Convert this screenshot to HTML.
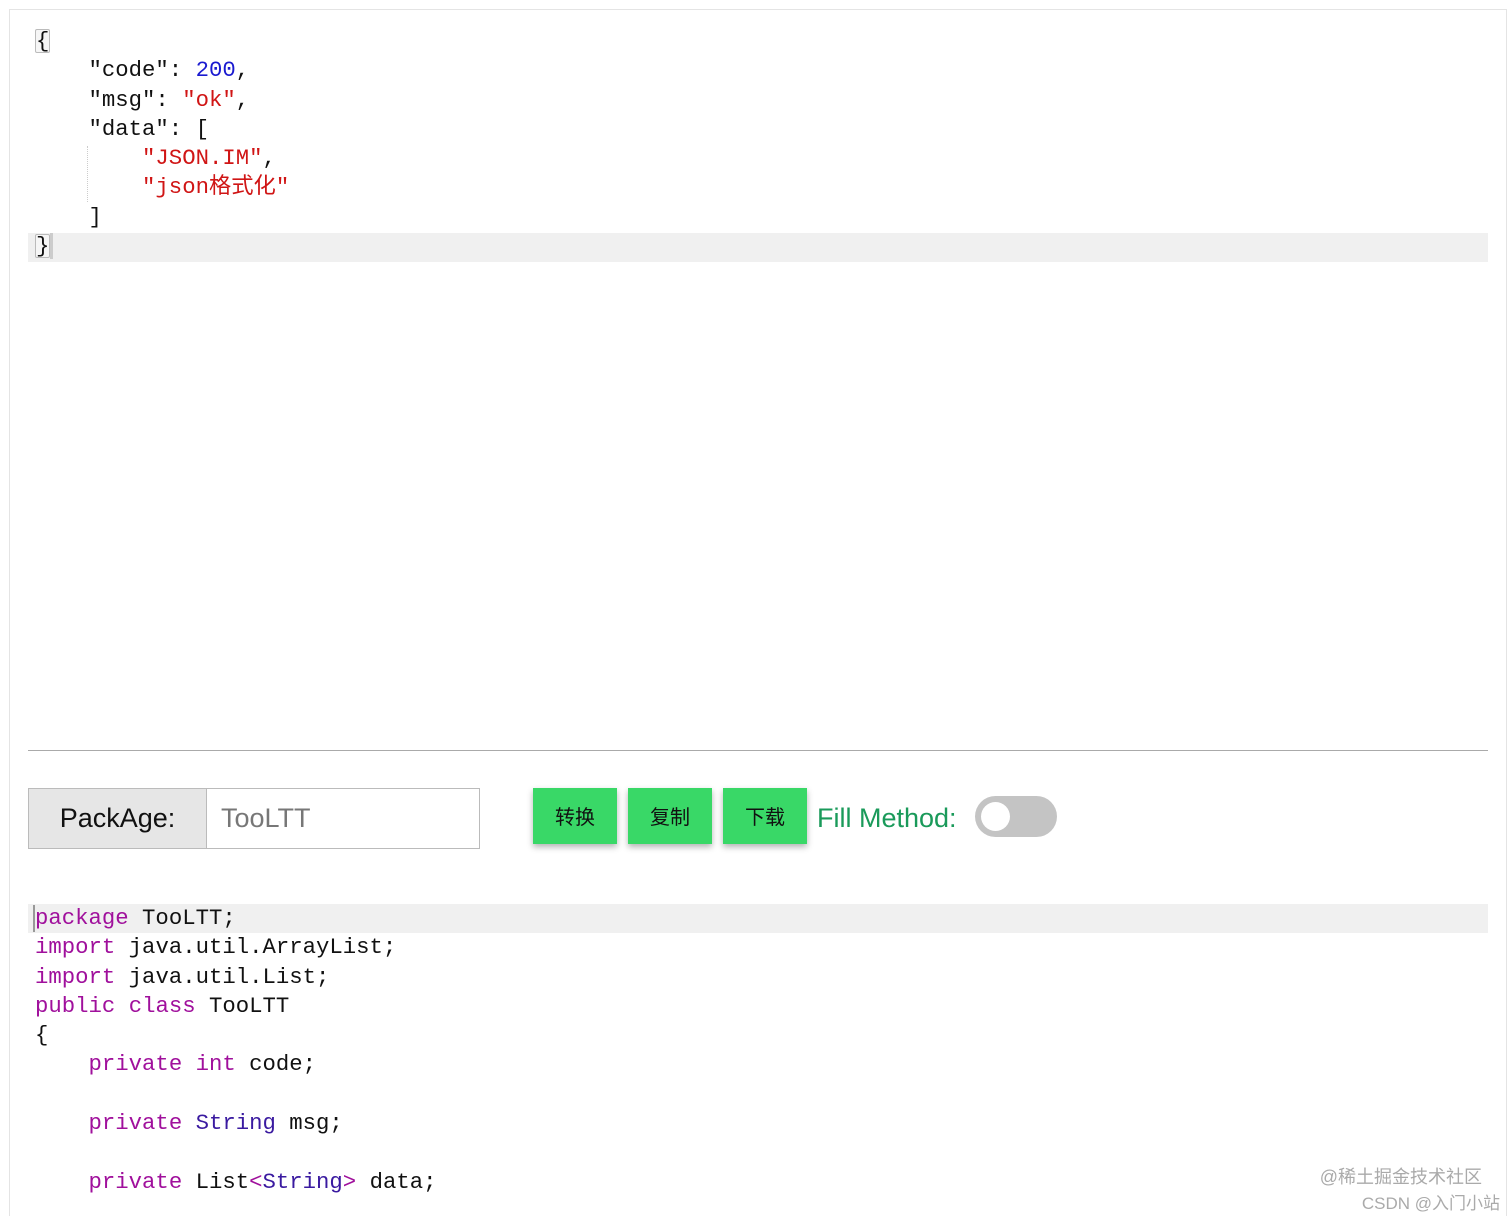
<!DOCTYPE html>
<html><head><meta charset="utf-8"><style>
html,body{margin:0;padding:0;background:#fff;width:1512px;height:1216px;overflow:hidden;position:relative}
.frame{position:absolute;left:9px;top:9px;width:1496px;height:1230px;border:1px solid #e4e4e4;}
.code{position:absolute;font-family:"Liberation Mono","Noto Sans CJK SC",monospace;font-size:22.3px;color:#111}
.ln{height:29.3px;line-height:29.3px;position:relative;white-space:pre}
.hl{position:absolute;left:28px;width:1460px;height:29px;background:#f0f0f0}
.n{color:#1a1ad0}.s{color:#d01515}.k{color:#a0109c}.t{color:#3a1aa0}
.br{display:inline-block;border:1px solid #bbb;border-radius:2px;line-height:22px;background:#f6f6f6}
.btn{position:absolute;top:788px;width:84px;height:56px;background:#39d867;box-shadow:0 3px 6px rgba(0,0,0,.3);font-family:"Noto Sans CJK SC",sans-serif;font-size:20px;line-height:56px;text-align:center;color:#111}
</style></head><body>
<div class="frame"></div>
<div class="hl" style="top:233px"></div>
<div class="hl" style="top:904px"></div>
<div style="position:absolute;left:87px;top:146px;height:56px;border-left:1px dotted #ccc"></div>
<div class="code" style="left:35px;top:27px">
<div class="ln"><span class="br">{</span></div>
<div class="ln">    "code": <span class="n">200</span>,</div>
<div class="ln">    "msg": <span class="s">"ok"</span>,</div>
<div class="ln">    "data": [</div>
<div class="ln">        <span class="s">"JSON.IM"</span>,</div>
<div class="ln">        <span class="s">"json格式化"</span></div>
<div class="ln">    ]</div>
<div class="ln"><span class="br">}</span><span style="display:inline-block;width:3px;height:26px;background:#ccc;vertical-align:middle"></span></div>
</div>
<div style="position:absolute;left:28px;top:750px;width:1460px;height:1px;background:#aaa"></div>
<div style="position:absolute;left:28px;top:788px;width:450px;height:59px;border:1px solid #bbb;font-family:'Liberation Sans',sans-serif;font-size:27px">
<div style="position:absolute;left:0;top:0;width:177px;height:59px;background:#e6e6e6;border-right:1px solid #bbb;line-height:59px;text-align:center;color:#111">PackAge:</div>
<div style="position:absolute;left:192px;top:0;line-height:59px;color:#777">TooLTT</div>
</div>
<div class="btn" style="left:533px">转换</div>
<div class="btn" style="left:628px">复制</div>
<div class="btn" style="left:723px">下载</div>
<div style="position:absolute;left:817px;top:798px;font-family:'Liberation Sans',sans-serif;font-size:27px;color:#1a9a5a;line-height:40px">Fill Method:</div>
<div style="position:absolute;left:975px;top:796px;width:82px;height:41px;border-radius:21px;background:#c4c4c4"><div style="position:absolute;left:6px;top:6px;width:29px;height:29px;border-radius:50%;background:#fff"></div></div>
<div style="position:absolute;left:33px;top:905px;width:2px;height:27px;background:#999"></div>
<div class="code" style="left:35px;top:904px">
<div class="ln"><span class="k">package</span> TooLTT;</div>
<div class="ln"><span class="k">import</span> java.util.ArrayList;</div>
<div class="ln"><span class="k">import</span> java.util.List;</div>
<div class="ln"><span class="k">public</span> <span class="k">class</span> TooLTT</div>
<div class="ln">{</div>
<div class="ln">    <span class="k">private</span> <span class="k">int</span> code;</div>
<div class="ln"> </div>
<div class="ln">    <span class="k">private</span> <span class="t">String</span> msg;</div>
<div class="ln"> </div>
<div class="ln">    <span class="k">private</span> List<span class="k">&lt;</span><span class="t">String</span><span class="k">&gt;</span> data;</div>
</div>
<div style="position:absolute;right:30px;top:1163px;font-family:'Liberation Sans','Noto Sans CJK SC',sans-serif;font-size:18px;color:#aaa;text-align:right">@稀土掘金技术社区</div>
<div style="position:absolute;right:12px;top:1189px;font-family:'Liberation Sans','Noto Sans CJK SC',sans-serif;font-size:17px;color:#aaa">CSDN @入门小站</div>
</body></html>
